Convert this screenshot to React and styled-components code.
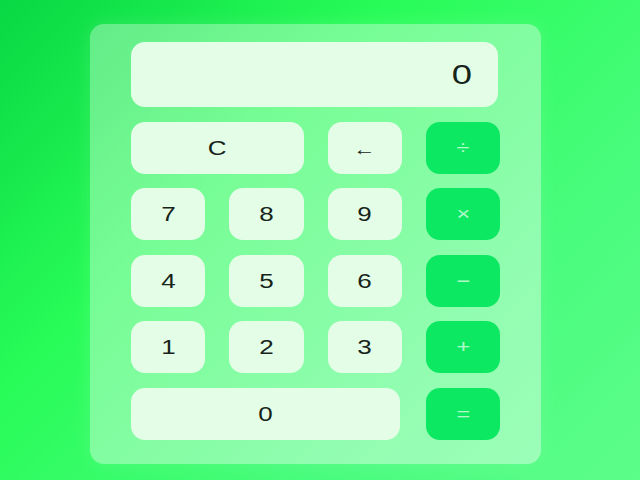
import React from 'react';
import styled, { createGlobalStyle } from 'styled-components';

const Global = createGlobalStyle`
  html, body {
    margin: 0;
    padding: 0;
  }
  body {
    width: 640px;
    height: 480px;
    overflow: hidden;
    font-family: "Liberation Sans", Arial, sans-serif;
  }
`;

const keys = [
  { label: 'C', span: 2 },
  { label: '←', small: true },
  { label: '÷', op: true },
  { label: '7' }, { label: '8' }, { label: '9' },
  { label: '×', op: true },
  { label: '4' }, { label: '5' }, { label: '6' },
  { label: '−', op: true },
  { label: '1' }, { label: '2' }, { label: '3' },
  { label: '+', op: true },
  { label: '0', span: 3 },
  { label: '=', op: true },
];

function App() {
  return (
    <Page>
      <Global />
      <Card>
        <Display>
          <Label big>0</Label>
        </Display>
        {keys.map((k) => (
          <Key key={k.label} span={k.span} op={k.op}>
            <Label small={k.small} op={k.op}>{k.label}</Label>
          </Key>
        ))}
      </Card>
    </Page>
  );
}

export default App;

const Page = styled.div`
  width: 640px;
  height: 480px;
  box-sizing: border-box;
  padding: 24px 0 0 90px;
  background: linear-gradient(135deg, #08d843 0%, #28fc58 35%, #48fc7c 70%, #5cfd8a 100%);
`;

const Card = styled.div`
  width: 451px;
  box-sizing: border-box;
  padding: 18px 41px 24px;
  border-radius: 14px;
  background: linear-gradient(135deg, rgba(255,255,255,0.34), rgba(255,255,255,0.42));
  box-shadow: 0 0 18px rgba(255,255,255,0.12);
  display: grid;
  grid-template-columns: repeat(4, 1fr);
  grid-template-rows: 65px repeat(5, 52px);
  column-gap: 24px;
  row-gap: 14.5px;
`;

const Display = styled.div`
  grid-column: span 4;
  margin-right: 2px;
  box-sizing: border-box;
  border-radius: 14px;
  background: #e4fde7;
  display: flex;
  align-items: center;
  justify-content: flex-end;
  padding-right: 28px;
  color: #16241a;
`;

const Key = styled.div`
  grid-column: span ${(p) => p.span || 1};
  border-radius: 14px;
  background: ${(p) => (p.op ? '#0de862' : '#e4fde7')};
  color: ${(p) => (p.op ? 'rgba(225,255,232,0.8)' : '#16241a')};
  display: flex;
  align-items: center;
  justify-content: center;
  margin-right: ${(p) => (p.span === 3 ? '2px' : '0')};
`;

const Label = styled.span`
  display: inline-block;
  font-size: ${(p) => (p.big ? '28px' : p.small ? '17px' : p.op ? '18px' : '20px')};
  transform: scaleX(1.3);
  margin-top: ${(p) => (p.small ? '4px' : '0')};
  line-height: 1;
`;
